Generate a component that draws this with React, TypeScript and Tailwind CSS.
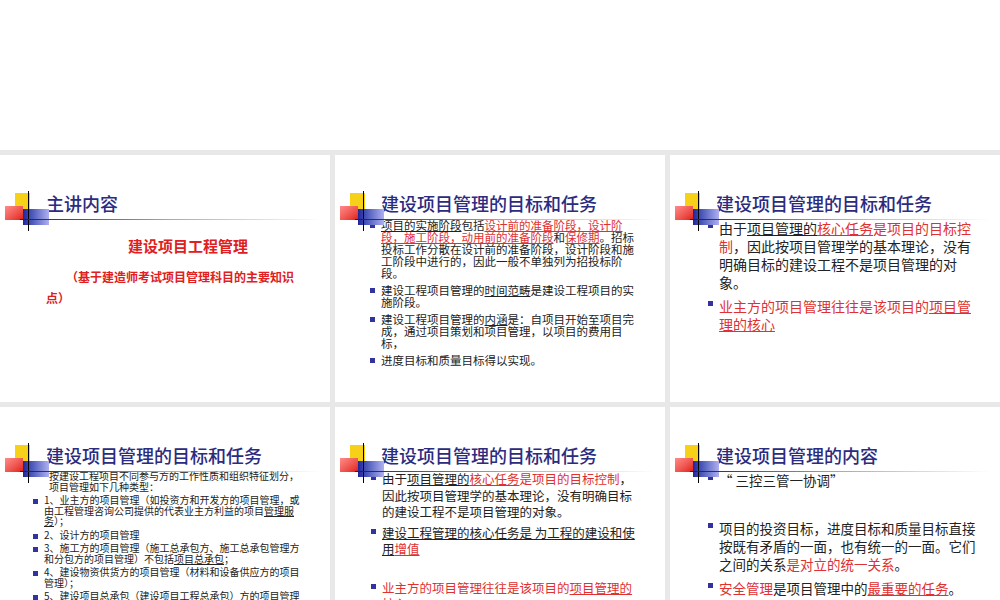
import React from "react";

const F = { fontFamily: '"Noto Sans CJK SC","Noto Sans",sans-serif' };

function Logo() {
  return (
    <div className="absolute left-[5px] top-[36px] w-[45px] h-[40px]">
      <div className="absolute left-[10px] top-[2px] w-[15px] h-[16px] bg-[#f7d117]" />
      <div className="absolute left-0 top-[15px] w-[18px] h-[14px] bg-gradient-to-br from-[#ff8a8a] to-[#e01010]" />
      <div className="absolute left-[18px] top-[18px] w-[26px] h-[16px] bg-gradient-to-r from-[#22229a] to-[#b0b0f0]" />
      <div className="absolute left-[23px] top-0 w-[1px] h-[40px] bg-black" />
      <div className="absolute left-[15px] top-[28px] w-[300px] h-[1px] bg-gradient-to-r from-[#222] via-[#aaa] to-transparent" />
    </div>
  );
}

function Slide({ title, children }: { title: string; children?: React.ReactNode }) {
  return (
    <div className="relative bg-white h-[247px] overflow-hidden">
      <Logo />
      <div className="pl-[46px] pt-[36px] text-[18px] leading-[24px] text-[#2b2b80] font-medium">{title}</div>
      <div className="pt-[4px]">{children}</div>
    </div>
  );
}

const B = () => <span className="inline-block w-[5px] h-[5px] bg-[#3333a0] mr-[6px] shrink-0 mt-[4px]" />;
const R = ({ children, u }: { children: React.ReactNode; u?: boolean }) => (
  <span className={"text-[#e03030] " + (u ? "underline" : "")}>{children}</span>
);
const U = ({ children }: { children: React.ReactNode }) => <span className="underline">{children}</span>;

function Item({ children, cls = "" }: { children: React.ReactNode; cls?: string }) {
  return (
    <div className={"flex " + cls}>
      <B />
      <div>{children}</div>
    </div>
  );
}

export default function App() {
  return (
    <div className="w-[1000px] h-[600px] bg-white overflow-hidden" style={F}>
      <div className="h-[150px] bg-white" />
      <div className="bg-[#e8e8e8] pt-[5px] grid grid-cols-[330px_330px_330px] gap-[5px] h-[450px]">
        <Slide title="主讲内容">
          <div className="text-[#e02020] font-bold text-[15px] text-center pl-[46px] mt-[16px]">建设项目工程管理</div>
          <div className="text-[#e02020] font-bold text-[12px] leading-[21px] mt-[8px] pl-[46px] pr-[20px]">
            <span className="inline-block w-[20px]" />（基于建造师考试项目管理科目的主要知识
          </div>
          <div className="text-[#e02020] font-bold text-[12px] leading-[21px] pl-[46px]">点）</div>
        </Slide>
        <Slide title="建设项目管理的目标和任务">
          <div className="pl-[35px] pr-[22px] text-[11.5px] leading-[12px] text-[#222] space-y-[5px]">
            <Item>
              <U>项目的实施阶段</U>包括<R u>设计前的准备阶段，设计阶段，施工阶段，动用前的准备阶段</R>和<R u>保修期</R>。招标投标工作分散在设计前的准备阶段，设计阶段和施工阶段中进行的，因此一般不单独列为招投标阶段。
            </Item>
            <Item>建设工程项目管理的<U>时间范畴</U>是建设工程项目的实施阶段。</Item>
            <Item>建设工程项目管理的<U>内涵</U>是：自项目开始至项目完成，通过项目策划和项目管理，以项目的费用目标，</Item>
            <Item>进度目标和质量目标得以实现。</Item>
          </div>
        </Slide>
        <Slide title="建设项目管理的目标和任务">
          <div className="pl-[38px] pr-[26px] text-[14px] leading-[18px] text-[#222] space-y-[6px]">
            <Item>由于<U>项目管理的</U><R u>核心任务</R><R>是项目的目标控制</R>，因此按项目管理学的基本理论，没有明确目标的建设工程不是项目管理的对象。</Item>
            <Item><R>业主方的项目管理往往是该项目的</R><R u>项目管理的核心</R></Item>
          </div>
        </Slide>
        <Slide title="建设项目管理的目标和任务">
          <div className="pl-[33px] pr-[30px] text-[10px] leading-[10.5px] text-[#222] space-y-[3px]">
            <div className="pl-[16px]">按建设工程项目不同参与方的工作性质和组织特征划分，项目管理如下几种类型：</div>
            <Item>1、业主方的项目管理（如投资方和开发方的项目管理，或由工程管理咨询公司提供的代表业主方利益的项目<U>管理服务</U>）；</Item>
            <Item>2、设计方的项目管理</Item>
            <Item>3、施工方的项目管理（施工总承包方、施工总承包管理方和分包方的项目管理）不包括<U>项目总承包</U>；</Item>
            <Item>4、建设物资供货方的项目管理（材料和设备供应方的项目管理）；</Item>
            <Item>5、建设项目总承包（建设项目工程总承包）方的项目管理</Item>
          </div>
        </Slide>
        <Slide title="建设项目管理的目标和任务">
          <div className="pl-[36px] pr-[30px] text-[12.5px] leading-[16.5px] text-[#222]">
            <Item>由于<U>项目管理的</U><R u>核心任务</R><R>是项目的目标控制</R>，因此按项目管理学的基本理论，没有明确目标的建设工程不是项目管理的对象。</Item>
            <Item cls="mt-[4px]"><U>建设工程管理的核心任务是 为工程的建设和使用</U><R u>增值</R></Item>
            <Item cls="mt-[22px]"><R>业主方的项目管理往往是该项目的</R><R u>项目管理的核心</R></Item>
          </div>
        </Slide>
        <Slide title="建设项目管理的内容">
          <div className="pl-[38px] pr-[20px] text-[13.5px] leading-[18px] text-[#222]">
            <Item>“ 三控三管一协调”</Item>
            <Item cls="mt-[30px]">项目的投资目标，进度目标和质量目标直接按既有矛盾的一面，也有统一的一面。它们之间的关系<R>是对立的统一关系</R>。</Item>
            <Item cls="mt-[6px]"><R>安全管理</R>是项目管理中的<R u>最重要的任务</R>。</Item>
          </div>
        </Slide>
      </div>
    </div>
  );
}
